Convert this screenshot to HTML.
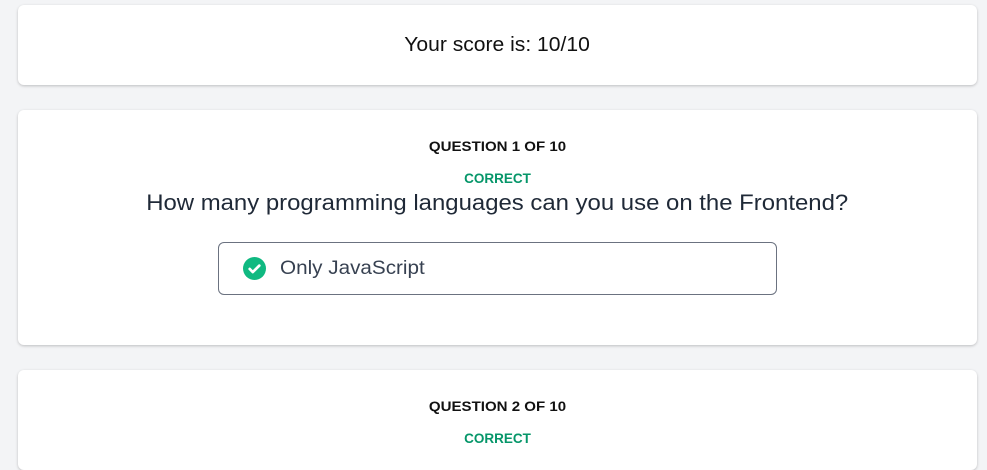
<!DOCTYPE html>
<html><head><style>
body{margin:0;background:#f3f4f6;font-family:"Liberation Sans",sans-serif;width:987px;height:440px;overflow:hidden;position:relative}
.card{position:absolute;left:18px;width:959px;background:#fff;border-radius:6px;box-shadow:0 1px 3px rgba(0,0,0,.15),0 1px 2px rgba(0,0,0,.08)}
.t{position:absolute;left:0;right:0;text-align:center;white-space:nowrap}
.t span{display:inline-block}
.q{font-weight:bold;font-size:13.5px;color:#111}
.q span{transform:scaleX(1.115)}
.c{font-weight:bold;font-size:13.5px;color:#059669}
.c span{transform:scaleX(1.0)}
</style></head><body>
<div class="card" style="top:5px;height:80px">
<div class="t" style="top:29px;font-size:20px;color:#111"><span style="transform:scaleX(1.054)">Your score is: 10/10</span></div>
</div>
<div class="card" style="top:110px;height:235px">
<div class="t q" style="top:29px"><span>QUESTION 1 OF 10</span></div>
<div class="t c" style="top:61px"><span>CORRECT</span></div>
<div class="t" style="top:80px;font-size:22.5px;color:#1f2937"><span style="transform:scaleX(1.063)">How many programming languages can you use on the Frontend?</span></div>
<div style="position:absolute;left:200px;top:132px;width:557px;height:51px;border:1px solid #6b7280;border-radius:6px">
<svg style="position:absolute;left:24px;top:14px" width="23" height="23" viewBox="0 0 24 24"><circle cx="12" cy="12" r="12" fill="#10b981"/><path d="M7 12.5l3.2 3.2L17 9" stroke="#fff" stroke-width="2.8" fill="none" stroke-linecap="round" stroke-linejoin="round"/></svg>
<div style="position:absolute;left:61px;top:14px;font-size:19.5px;color:#374151;transform:scaleX(1.06);transform-origin:left">Only JavaScript</div>
</div>
</div>
<div class="card" style="top:370px;height:100px">
<div class="t q" style="top:29px"><span>QUESTION 2 OF 10</span></div>
<div class="t c" style="top:61px"><span>CORRECT</span></div>
</div>
</body></html>
